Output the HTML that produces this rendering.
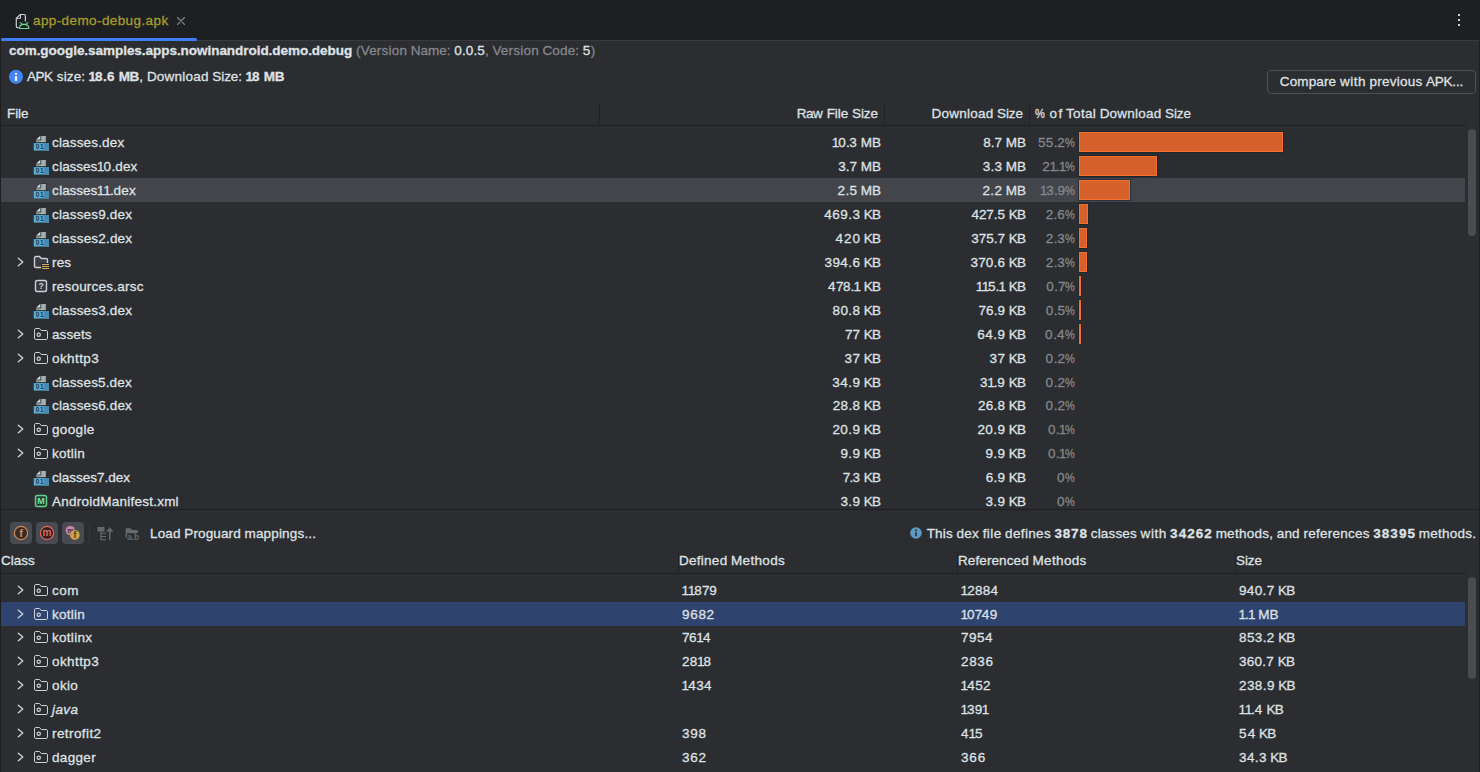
<!DOCTYPE html><html><head><meta charset="utf-8"><title>APK Analyzer</title><style>
html,body{margin:0;padding:0;background:#2b2d30;}
body{-webkit-text-stroke:.3px;width:1480px;height:772px;overflow:hidden;font-family:"Liberation Sans",sans-serif;font-size:13.5px;color:#dfe1e5;}
#app{position:relative;width:1480px;height:772px;overflow:hidden;background:#2b2d30;}
#app *{box-sizing:border-box;}
.abs{position:absolute;}
.t{position:absolute;white-space:pre;line-height:16px;height:16px;}
#tabbar{position:absolute;left:0;top:0;width:1480px;height:40px;background:#1e1f22;}
#tabline{position:absolute;left:0;top:40px;width:1480px;height:1px;background:#393b40;}
#tabul{position:absolute;left:1px;top:38px;width:196px;height:3px;background:#3f7ff5;border-radius:1.5px;}
#lborder{position:absolute;left:0;top:0;width:1px;height:772px;background:#1e1f22;}
#rborder{position:absolute;left:1479px;top:40px;width:1px;height:732px;background:#1e1f22;}
.gray{color:#84878d;}
b{font-weight:bold;}
.hdr{position:absolute;left:1px;width:1465px;height:24px;}
.hline{position:absolute;left:1px;width:1465px;height:1px;background:#1e1f22;}
.vsep{position:absolute;width:1px;background:#222326;}
.row{position:absolute;left:1px;width:1464px;height:24px;}
.row.sel1{background:#43454a;}
.row.sel2{background:#2e436e;}
.row > span{position:absolute;top:5px;line-height:16px;height:16px;white-space:pre;}
.row > .ic{position:absolute;left:32px;top:4px;}
.row > .chev{position:absolute;left:11px;top:4px;}
.row > .nm{left:51px;}
.row > .raw{right:584px;text-align:right;}
.row > .dl{right:439px;text-align:right;}
.row > .pct{right:389px;text-align:right;color:#84878d;}
.row > .bar{left:1078px;top:2px;height:20px;background:#d6602a;border:1px solid #f4702f;box-shadow:0 0 0 1px rgba(14,34,48,.5);}
.row > .c1{left:681px;}
.row > .c2{left:960px;}
.row > .c3{left:1238px;}
.thumb{position:absolute;left:1468px;width:8px;background:#4a4c50;border-radius:4px;}
#btn{position:absolute;left:1267px;top:70px;width:209px;height:24px;border:1px solid #4e5157;border-radius:4px;text-align:center;line-height:22px;}
.tb{position:absolute;top:522px;width:22px;height:22px;border-radius:4px;background:#484b51;}
.tb svg{position:absolute;left:0;top:0;}
svg text{-webkit-text-stroke:0;}

</style></head><body><div id="app">
<div id="tabbar"></div><div id="tabline"></div><div id="tabul"></div>
<svg class="abs" style="left:13px;top:11px" width="18" height="20" viewBox="0 0 18 20" fill="none"><path d="M5.500 16.600H4.600c-.7 0-1.300-.6-1.300-1.300V7.300L7.200 3.500h3.900c.7 0 1.300.6 1.300 1.300V10.500" stroke="#ced0d6" stroke-width="1.200"/><path d="M3.800 7.400H7.500V3.900" stroke="#ced0d6" stroke-width="1"/><path d="M6.300 17.450c0-2.400 2-4.100 4.750-4.100s4.800 1.700 4.800 4.100z" stroke="#6fd98f" stroke-width="1.150" fill="#1e1f22"/><path d="M8.600 13.800L7 11.200L9.900 13.200zM13.600 13.800L15.200 11.200L12.300 13.200z" fill="#6fd98f" stroke="#6fd98f" stroke-width=".5" stroke-linejoin="round"/></svg>
<span class="t" style="left:33px;top:13px;color:#a59d2a" id="tabtxt"><span style="letter-spacing:0.4px;margin-right:-0.4px">app-demo-debug.apk</span></span>
<svg class="abs" style="left:173px;top:13px" width="16" height="16" viewBox="0 0 16 16" stroke="#84878d" stroke-width="1.100" stroke-linecap="round"><path d="M4.500 4.500l7 7M11.500 4.500l-7 7"/></svg>
<div class="abs" style="left:1458px;top:14px;width:2px;height:2px;background:#ced0d6"></div>
<div class="abs" style="left:1458px;top:19px;width:2px;height:2px;background:#ced0d6"></div>
<div class="abs" style="left:1458px;top:24px;width:2px;height:2px;background:#ced0d6"></div>
<span class="t" style="left:9px;top:43px" id="pkgline"><b><span style="letter-spacing:-0.04px;margin-right:0.04px">com.google.samples.apps.nowinandroid.demo.debug</span></b><span style="color:#84878d;"> <span style="letter-spacing:0.21px;margin-right:-0.21px">(Version</span> Name: </span><span style="letter-spacing:0.15px;margin-right:-0.15px">0.0.5</span><span style="color:#84878d;">, <span style="letter-spacing:0.21px;margin-right:-0.21px">Version</span> <span style="letter-spacing:0.14px;margin-right:-0.14px">Code:</span> </span><span style="margin-right:0.39px">5</span><span style="color:#84878d;"><span style="margin-right:0.25px">)</span></span></span>
<svg class="abs" style="left:8px;top:69px" width="16" height="16" viewBox="0 0 16 16"><circle cx="8" cy="7.800" r="7.100" fill="#4285f6"/><rect x="6.900" y="7.100" width="2.200" height="4.800" fill="#fff"/><rect x="6.900" y="4" width="2.200" height="1.700" rx=".4" fill="#fff"/></svg>
<span class="t" style="left:27px;top:69px" id="apkline"><span style="letter-spacing:-0.5px;margin-right:0.5px">APK</span> <span style="letter-spacing:0.14px;margin-right:-0.14px">size:</span> <b><span style="margin:0 -0.98px 0 -0.39px">1</span><span style="margin-right:0.5px">8</span><span style="margin-right:0.1px">.</span><span style="margin-right:0.49px">6</span> <span style="letter-spacing:-0.34px;margin-right:0.34px">MB</span></b>, <span style="letter-spacing:0.22px;margin-right:-0.22px">Download</span> <span style="letter-spacing:-0.05px;margin-right:0.05px">Size:</span> <b><span style="margin:0 -0.98px 0 -0.39px">1</span><span style="margin-right:0.5px">8</span> <span style="letter-spacing:-0.34px;margin-right:0.34px">MB</span></b></span>
<div id="btn"><span style="letter-spacing:0.13px;margin-right:-0.13px">Compare</span> <span style="letter-spacing:0.57px;margin-right:-0.57px">with</span> <span style="letter-spacing:0.25px;margin-right:-0.25px">previous</span> <span style="letter-spacing:-0.2px;margin-right:0.2px">APK...</span></div>
<div class="hdr" style="top:102px">
<span class="t" style="left:6px;top:4px"><span style="letter-spacing:-0.07px;margin-right:0.07px">File</span></span>
<span class="t" style="right:588px;top:4px"><span style="letter-spacing:-0.38px;margin-right:0.38px">Raw</span> <span style="letter-spacing:-0.07px;margin-right:0.07px">File</span> <span style="letter-spacing:-0.07px;margin-right:0.07px">Size</span></span>
<span class="t" style="right:443px;top:4px"><span style="letter-spacing:0.22px;margin-right:-0.22px">Download</span> <span style="letter-spacing:-0.07px;margin-right:0.07px">Size</span></span>
<span class="t" style="left:1034px;top:4px"><span style="display:inline-block;transform:scaleX(.82);transform-origin:0 50%;margin-right:-1.25px">%</span> <span style="letter-spacing:1.34px;margin-right:-1.34px">of</span> <span style="letter-spacing:0.35px;margin-right:-0.35px">Total</span> <span style="letter-spacing:0.22px;margin-right:-0.22px">Download</span> <span style="letter-spacing:-0.07px;margin-right:0.07px">Size</span></span>
</div>
<div class="vsep" style="left:599px;top:103px;height:21px"></div>
<div class="vsep" style="left:884px;top:103px;height:21px"></div>
<div class="vsep" style="left:1029px;top:103px;height:21px"></div>
<div class="hline" style="top:125px"></div>

<div id="toprows">
<div class="row" style="top:130px">
<svg class="ic" width="17" height="18" viewBox="0 0 17 18"><path d="M7.300 1.500H13.300V8.800H2.800V5.800z" fill="#a6adb3" stroke="#17181a" stroke-width=".7"/><path d="M3.300 5.600L7.200 1.900V5.600z" fill="#cdd2d6"/><path d="M3 6.100H7.800V2" stroke="#3d4146" stroke-width=".9" fill="none"/><rect x="3.200" y="6.600" width="4.200" height="1" fill="#8b9197"/><rect x=".7" y="8.700" width="15.300" height="8.300" fill="#1f1a19"/><rect x=".7" y="9.100" width="15.300" height="7.500" fill="#58aedb"/><rect x="10.700" y="9.100" width="5.300" height="7.500" fill="#488bae"/><text x="2.800" y="15.200" font-family="Liberation Sans, sans-serif" font-weight="bold" font-size="6.600" letter-spacing=".5" fill="#1d3a4d">01</text></svg>
<span class="nm"><span style="letter-spacing:0.16px;margin-right:-0.16px">classes.dex</span></span><span class="raw"><span style="margin:0 -1.07px 0 -0.44px">1</span><span style="margin-right:0.29px">0</span><span style="margin-right:-0.42px">.</span><span style="margin-right:0.12px">3</span> MB</span><span class="dl"><span style="letter-spacing:-0.05px;margin-right:0.05px">8.7</span> MB</span><span class="pct"><span style="margin-right:0.33px">5</span><span style="margin-right:0.33px">5</span><span style="margin-right:-0.08px">.</span><span style="margin-right:0.36px">2</span><span style="display:inline-block;transform:scaleX(.82);transform-origin:0 50%;margin-right:-1.25px">%</span></span>
<span class="bar" style="width:204px"></span>
</div>
<div class="row" style="top:154px">
<svg class="ic" width="17" height="18" viewBox="0 0 17 18"><path d="M7.300 1.500H13.300V8.800H2.800V5.800z" fill="#a6adb3" stroke="#17181a" stroke-width=".7"/><path d="M3.300 5.600L7.200 1.900V5.600z" fill="#cdd2d6"/><path d="M3 6.100H7.800V2" stroke="#3d4146" stroke-width=".9" fill="none"/><rect x="3.200" y="6.600" width="4.200" height="1" fill="#8b9197"/><rect x=".7" y="8.700" width="15.300" height="8.300" fill="#1f1a19"/><rect x=".7" y="9.100" width="15.300" height="7.500" fill="#58aedb"/><rect x="10.700" y="9.100" width="5.300" height="7.500" fill="#488bae"/><text x="2.800" y="15.200" font-family="Liberation Sans, sans-serif" font-weight="bold" font-size="6.600" letter-spacing=".5" fill="#1d3a4d">01</text></svg>
<span class="nm"><span style="margin-right:0.55px">c</span>l<span style="margin-right:-0.34px">a</span>ss<span style="margin-right:-0.06px">e</span>s<span style="margin:0 -0.81px 0 -0.44px">1</span><span style="margin-right:0.55px">0</span><span style="margin-right:-0.16px">.</span><span style="margin-right:0.31px">d</span><span style="margin-right:-0.06px">e</span><span style="margin-right:0.22px">x</span></span><span class="raw"><span style="letter-spacing:-0.06px;margin-right:0.06px">3.7</span> MB</span><span class="dl"><span style="letter-spacing:0.2px;margin-right:-0.2px">3.3</span> MB</span><span class="pct">2<span style="margin:0 -1.07px 0 -0.44px">1</span><span style="margin-right:-0.42px">.</span><span style="margin:0 -1.07px 0 -0.44px">1</span><span style="display:inline-block;transform:scaleX(.82);transform-origin:0 50%;margin-right:-1.25px">%</span></span>
<span class="bar" style="width:78px"></span>
</div>
<div class="row sel1" style="top:178px">
<svg class="ic" width="17" height="18" viewBox="0 0 17 18"><path d="M7.300 1.500H13.300V8.800H2.800V5.800z" fill="#a6adb3" stroke="#17181a" stroke-width=".7"/><path d="M3.300 5.600L7.200 1.900V5.600z" fill="#cdd2d6"/><path d="M3 6.100H7.800V2" stroke="#3d4146" stroke-width=".9" fill="none"/><rect x="3.200" y="6.600" width="4.200" height="1" fill="#8b9197"/><rect x=".7" y="8.700" width="15.300" height="8.300" fill="#1f1a19"/><rect x=".7" y="9.100" width="15.300" height="7.500" fill="#58aedb"/><rect x="10.700" y="9.100" width="5.300" height="7.500" fill="#488bae"/><text x="2.800" y="15.200" font-family="Liberation Sans, sans-serif" font-weight="bold" font-size="6.600" letter-spacing=".5" fill="#1d3a4d">01</text></svg>
<span class="nm"><span style="margin-right:0.57px">c</span>l<span style="margin-right:-0.32px">a</span>sses<span style="margin:0 -0.79px 0 -0.44px">1</span><span style="margin:0 -0.79px 0 -0.44px">1</span><span style="margin-right:-0.14px">.</span><span style="margin-right:0.33px">d</span>e<span style="margin-right:0.24px">x</span></span><span class="raw"><span style="letter-spacing:0.31px;margin-right:-0.31px">2.5</span> MB</span><span class="dl"><span style="letter-spacing:0.41px;margin-right:-0.41px">2.2</span> MB</span><span class="pct"><span style="margin:0 -0.96px 0 -0.44px">1</span><span style="margin-right:0.22px">3</span><span style="margin-right:-0.31px">.</span><span style="margin-right:0.26px">9</span><span style="display:inline-block;transform:scaleX(.82);transform-origin:0 50%;margin-right:-1.25px">%</span></span>
<span class="bar" style="width:51px"></span>
</div>
<div class="row" style="top:202px">
<svg class="ic" width="17" height="18" viewBox="0 0 17 18"><path d="M7.300 1.500H13.300V8.800H2.800V5.800z" fill="#a6adb3" stroke="#17181a" stroke-width=".7"/><path d="M3.300 5.600L7.200 1.900V5.600z" fill="#cdd2d6"/><path d="M3 6.100H7.800V2" stroke="#3d4146" stroke-width=".9" fill="none"/><rect x="3.200" y="6.600" width="4.200" height="1" fill="#8b9197"/><rect x=".7" y="8.700" width="15.300" height="8.300" fill="#1f1a19"/><rect x=".7" y="9.100" width="15.300" height="7.500" fill="#58aedb"/><rect x="10.700" y="9.100" width="5.300" height="7.500" fill="#488bae"/><text x="2.800" y="15.200" font-family="Liberation Sans, sans-serif" font-weight="bold" font-size="6.600" letter-spacing=".5" fill="#1d3a4d">01</text></svg>
<span class="nm"><span style="letter-spacing:0.17px;margin-right:-0.17px">classes9.dex</span></span><span class="raw"><span style="letter-spacing:0.46px;margin-right:-0.46px">469.3</span> <span style="letter-spacing:-0.77px;margin-right:0.77px">KB</span></span><span class="dl"><span style="letter-spacing:-0.07px;margin-right:0.07px">427.5</span> <span style="letter-spacing:-0.77px;margin-right:0.77px">KB</span></span><span class="pct"><span style="margin-right:0.34px">2</span><span style="margin-right:-0.09px">.</span><span style="margin-right:0.47px">6</span><span style="display:inline-block;transform:scaleX(.82);transform-origin:0 50%;margin-right:-1.25px">%</span></span>
<span class="bar" style="width:9px"></span>
</div>
<div class="row" style="top:226px">
<svg class="ic" width="17" height="18" viewBox="0 0 17 18"><path d="M7.300 1.500H13.300V8.800H2.800V5.800z" fill="#a6adb3" stroke="#17181a" stroke-width=".7"/><path d="M3.300 5.600L7.200 1.900V5.600z" fill="#cdd2d6"/><path d="M3 6.100H7.800V2" stroke="#3d4146" stroke-width=".9" fill="none"/><rect x="3.200" y="6.600" width="4.200" height="1" fill="#8b9197"/><rect x=".7" y="8.700" width="15.300" height="8.300" fill="#1f1a19"/><rect x=".7" y="9.100" width="15.300" height="7.500" fill="#58aedb"/><rect x="10.700" y="9.100" width="5.300" height="7.500" fill="#488bae"/><text x="2.800" y="15.200" font-family="Liberation Sans, sans-serif" font-weight="bold" font-size="6.600" letter-spacing=".5" fill="#1d3a4d">01</text></svg>
<span class="nm"><span style="letter-spacing:0.18px;margin-right:-0.18px">classes2.dex</span></span><span class="raw"><span style="letter-spacing:1.0px;margin-right:-1.0px">420</span> <span style="letter-spacing:-0.77px;margin-right:0.77px">KB</span></span><span class="dl">375.7 <span style="letter-spacing:-0.77px;margin-right:0.77px">KB</span></span><span class="pct"><span style="margin-right:0.34px">2</span><span style="margin-right:-0.1px">.</span><span style="margin-right:0.43px">3</span><span style="display:inline-block;transform:scaleX(.82);transform-origin:0 50%;margin-right:-1.25px">%</span></span>
<span class="bar" style="width:8px"></span>
</div>
<div class="row" style="top:250px">
<svg class="chev" width="16" height="16" viewBox="0 0 16 16" fill="none" stroke="#ced0d6" stroke-width="1.400" stroke-linecap="round" stroke-linejoin="round"><path d="M6.300 4.300L10.800 8L6.300 11.700"/></svg>
<svg class="ic" width="16" height="16" viewBox="0 0 16 16" fill="none"><path d="M1.500 4v8.200c0 .7.6 1.300 1.300 1.300h10.400c.7 0 1.300-.6 1.300-1.300V5.800c0-.7-.6-1.300-1.300-1.300H8.300L6.500 2.500H2.800c-.7 0-1.300.6-1.300 1.300z" stroke="#ced0d6" stroke-width="1.400" fill="#3b3d42"/><rect x="8" y="9" width="8.500" height="7" fill="#2b2d30"/><path d="M9 10.500h7M9 12.500h7M9 14.500h7" stroke="#d6ae58" stroke-width="1.100"/></svg>
<span class="nm"><span style="letter-spacing:0.18px;margin-right:-0.18px">res</span></span><span class="raw"><span style="letter-spacing:0.43px;margin-right:-0.43px">394.6</span> <span style="letter-spacing:-0.77px;margin-right:0.77px">KB</span></span><span class="dl"><span style="letter-spacing:0.18px;margin-right:-0.18px">370.6</span> <span style="letter-spacing:-0.77px;margin-right:0.77px">KB</span></span><span class="pct"><span style="margin-right:0.34px">2</span><span style="margin-right:-0.1px">.</span><span style="margin-right:0.43px">3</span><span style="display:inline-block;transform:scaleX(.82);transform-origin:0 50%;margin-right:-1.25px">%</span></span>
<span class="bar" style="width:8px"></span>
</div>
<div class="row" style="top:274px">
<svg class="ic" width="16" height="16" viewBox="0 0 16 16" fill="none"><rect x="2.500" y="2.500" width="11" height="11" rx="1.800" stroke="#ced0d6" stroke-width="1.400" fill="#36383d"/><text x="8" y="11.300" text-anchor="middle" font-family="Liberation Sans, sans-serif" font-weight="bold" font-size="8.500" fill="#ced0d6">?</text></svg>
<span class="nm"><span style="letter-spacing:0.22px;margin-right:-0.22px">resources.arsc</span></span><span class="raw"><span style="margin-right:0.49px">4</span><span style="margin-right:-0.56px">7</span><span style="margin-right:0.13px">8</span><span style="margin-right:-0.42px">.</span><span style="margin:0 -1.07px 0 -0.44px">1</span> <span style="letter-spacing:-0.77px;margin-right:0.77px">KB</span></span><span class="dl"><span style="margin:0 -1.07px 0 -0.44px">1</span><span style="margin:0 -1.07px 0 -0.44px">1</span>5<span style="margin-right:-0.42px">.</span><span style="margin:0 -1.07px 0 -0.44px">1</span> <span style="letter-spacing:-0.77px;margin-right:0.77px">KB</span></span><span class="pct"><span style="margin-right:0.57px">0</span><span style="margin-right:-0.14px">.</span><span style="margin-right:-0.28px">7</span><span style="display:inline-block;transform:scaleX(.82);transform-origin:0 50%;margin-right:-1.25px">%</span></span>
<span class="bar" style="width:2px"></span>
</div>
<div class="row" style="top:298px">
<svg class="ic" width="17" height="18" viewBox="0 0 17 18"><path d="M7.300 1.500H13.300V8.800H2.800V5.800z" fill="#a6adb3" stroke="#17181a" stroke-width=".7"/><path d="M3.300 5.600L7.200 1.900V5.600z" fill="#cdd2d6"/><path d="M3 6.100H7.800V2" stroke="#3d4146" stroke-width=".9" fill="none"/><rect x="3.200" y="6.600" width="4.200" height="1" fill="#8b9197"/><rect x=".7" y="8.700" width="15.300" height="8.300" fill="#1f1a19"/><rect x=".7" y="9.100" width="15.300" height="7.500" fill="#58aedb"/><rect x="10.700" y="9.100" width="5.300" height="7.500" fill="#488bae"/><text x="2.800" y="15.200" font-family="Liberation Sans, sans-serif" font-weight="bold" font-size="6.600" letter-spacing=".5" fill="#1d3a4d">01</text></svg>
<span class="nm"><span style="letter-spacing:0.17px;margin-right:-0.17px">classes3.dex</span></span><span class="raw"><span style="letter-spacing:0.38px;margin-right:-0.38px">80.8</span> <span style="letter-spacing:-0.77px;margin-right:0.77px">KB</span></span><span class="dl"><span style="letter-spacing:0.07px;margin-right:-0.07px">76.9</span> <span style="letter-spacing:-0.77px;margin-right:0.77px">KB</span></span><span class="pct"><span style="margin-right:0.57px">0</span><span style="margin-right:-0.14px">.</span><span style="margin-right:0.27px">5</span><span style="display:inline-block;transform:scaleX(.82);transform-origin:0 50%;margin-right:-1.25px">%</span></span>
<span class="bar" style="width:1px"></span>
</div>
<div class="row" style="top:322px">
<svg class="chev" width="16" height="16" viewBox="0 0 16 16" fill="none" stroke="#ced0d6" stroke-width="1.400" stroke-linecap="round" stroke-linejoin="round"><path d="M6.300 4.300L10.800 8L6.300 11.700"/></svg>
<svg class="ic" width="16" height="16" viewBox="0 0 16 16" fill="none" stroke="#ced0d6" stroke-width="1"><path d="M1.5 4v8.2c0 .7.6 1.3 1.300 1.300h10.400c.7 0 1.300-.6 1.300-1.300V5.800c0-.7-.6-1.300-1.300-1.300H8.300L6.500 2.500H2.800c-.7 0-1.300.6-1.300 1.300z"/><circle cx="5.700" cy="8.700" r="1.650" fill="none" stroke-width="1.200"/></svg>
<span class="nm"><span style="letter-spacing:0.11px;margin-right:-0.11px">assets</span></span><span class="raw"><span style="letter-spacing:-0.06px;margin-right:0.06px">77</span> <span style="letter-spacing:-0.77px;margin-right:0.77px">KB</span></span><span class="dl"><span style="letter-spacing:0.49px;margin-right:-0.49px">64.9</span> <span style="letter-spacing:-0.77px;margin-right:0.77px">KB</span></span><span class="pct"><span style="margin-right:0.61px">0</span><span style="margin-right:-0.09px">.</span><span style="margin-right:0.81px">4</span><span style="display:inline-block;transform:scaleX(.82);transform-origin:0 50%;margin-right:-1.25px">%</span></span>
<span class="bar" style="width:1px"></span>
</div>
<div class="row" style="top:346px">
<svg class="chev" width="16" height="16" viewBox="0 0 16 16" fill="none" stroke="#ced0d6" stroke-width="1.400" stroke-linecap="round" stroke-linejoin="round"><path d="M6.300 4.300L10.800 8L6.300 11.700"/></svg>
<svg class="ic" width="16" height="16" viewBox="0 0 16 16" fill="none" stroke="#ced0d6" stroke-width="1"><path d="M1.5 4v8.2c0 .7.6 1.3 1.300 1.300h10.400c.7 0 1.300-.6 1.300-1.300V5.800c0-.7-.6-1.300-1.300-1.300H8.300L6.500 2.500H2.800c-.7 0-1.300.6-1.300 1.300z"/><circle cx="5.700" cy="8.700" r="1.650" fill="none" stroke-width="1.200"/></svg>
<span class="nm"><span style="letter-spacing:0.42px;margin-right:-0.42px">okhttp3</span></span><span class="raw"><span style="letter-spacing:0.36px;margin-right:-0.36px">37</span> <span style="letter-spacing:-0.77px;margin-right:0.77px">KB</span></span><span class="dl"><span style="letter-spacing:0.36px;margin-right:-0.36px">37</span> <span style="letter-spacing:-0.77px;margin-right:0.77px">KB</span></span><span class="pct"><span style="margin-right:0.61px">0</span><span style="margin-right:-0.09px">.</span><span style="margin-right:0.34px">2</span><span style="display:inline-block;transform:scaleX(.82);transform-origin:0 50%;margin-right:-1.25px">%</span></span>
</div>
<div class="row" style="top:370px">
<svg class="ic" width="17" height="18" viewBox="0 0 17 18"><path d="M7.300 1.500H13.300V8.800H2.800V5.800z" fill="#a6adb3" stroke="#17181a" stroke-width=".7"/><path d="M3.300 5.600L7.200 1.900V5.600z" fill="#cdd2d6"/><path d="M3 6.100H7.800V2" stroke="#3d4146" stroke-width=".9" fill="none"/><rect x="3.200" y="6.600" width="4.200" height="1" fill="#8b9197"/><rect x=".7" y="8.700" width="15.300" height="8.300" fill="#1f1a19"/><rect x=".7" y="9.100" width="15.300" height="7.500" fill="#58aedb"/><rect x="10.700" y="9.100" width="5.300" height="7.500" fill="#488bae"/><text x="2.800" y="15.200" font-family="Liberation Sans, sans-serif" font-weight="bold" font-size="6.600" letter-spacing=".5" fill="#1d3a4d">01</text></svg>
<span class="nm"><span style="letter-spacing:0.15px;margin-right:-0.15px">classes5.dex</span></span><span class="raw"><span style="letter-spacing:0.48px;margin-right:-0.48px">34.9</span> <span style="letter-spacing:-0.77px;margin-right:0.77px">KB</span></span><span class="dl"><span style="margin-right:0.22px">3</span><span style="margin:0 -0.96px 0 -0.44px">1</span><span style="margin-right:-0.31px">.</span><span style="margin-right:0.25px">9</span> <span style="letter-spacing:-0.77px;margin-right:0.77px">KB</span></span><span class="pct"><span style="margin-right:0.61px">0</span><span style="margin-right:-0.09px">.</span><span style="margin-right:0.34px">2</span><span style="display:inline-block;transform:scaleX(.82);transform-origin:0 50%;margin-right:-1.25px">%</span></span>
</div>
<div class="row" style="top:393px">
<svg class="ic" width="17" height="18" viewBox="0 0 17 18"><path d="M7.300 1.500H13.300V8.800H2.800V5.800z" fill="#a6adb3" stroke="#17181a" stroke-width=".7"/><path d="M3.300 5.600L7.200 1.900V5.600z" fill="#cdd2d6"/><path d="M3 6.100H7.800V2" stroke="#3d4146" stroke-width=".9" fill="none"/><rect x="3.200" y="6.600" width="4.200" height="1" fill="#8b9197"/><rect x=".7" y="8.700" width="15.300" height="8.300" fill="#1f1a19"/><rect x=".7" y="9.100" width="15.300" height="7.500" fill="#58aedb"/><rect x="10.700" y="9.100" width="5.300" height="7.500" fill="#488bae"/><text x="2.800" y="15.200" font-family="Liberation Sans, sans-serif" font-weight="bold" font-size="6.600" letter-spacing=".5" fill="#1d3a4d">01</text></svg>
<span class="nm"><span style="letter-spacing:0.16px;margin-right:-0.16px">classes6.dex</span></span><span class="raw"><span style="letter-spacing:0.3px;margin-right:-0.3px">28.8</span> <span style="letter-spacing:-0.77px;margin-right:0.77px">KB</span></span><span class="dl"><span style="letter-spacing:0.26px;margin-right:-0.26px">26.8</span> <span style="letter-spacing:-0.77px;margin-right:0.77px">KB</span></span><span class="pct"><span style="margin-right:0.61px">0</span><span style="margin-right:-0.09px">.</span><span style="margin-right:0.34px">2</span><span style="display:inline-block;transform:scaleX(.82);transform-origin:0 50%;margin-right:-1.25px">%</span></span>
</div>
<div class="row" style="top:417px">
<svg class="chev" width="16" height="16" viewBox="0 0 16 16" fill="none" stroke="#ced0d6" stroke-width="1.400" stroke-linecap="round" stroke-linejoin="round"><path d="M6.300 4.300L10.800 8L6.300 11.700"/></svg>
<svg class="ic" width="16" height="16" viewBox="0 0 16 16" fill="none" stroke="#ced0d6" stroke-width="1"><path d="M1.5 4v8.2c0 .7.6 1.3 1.300 1.300h10.400c.7 0 1.300-.6 1.300-1.300V5.800c0-.7-.6-1.300-1.300-1.300H8.300L6.500 2.500H2.800c-.7 0-1.300.6-1.300 1.300z"/><circle cx="5.700" cy="8.700" r="1.650" fill="none" stroke-width="1.200"/></svg>
<span class="nm"><span style="letter-spacing:0.34px;margin-right:-0.34px">google</span></span><span class="raw"><span style="letter-spacing:0.42px;margin-right:-0.42px">20.9</span> <span style="letter-spacing:-0.77px;margin-right:0.77px">KB</span></span><span class="dl"><span style="letter-spacing:0.42px;margin-right:-0.42px">20.9</span> <span style="letter-spacing:-0.77px;margin-right:0.77px">KB</span></span><span class="pct"><span style="margin-right:0.29px">0</span><span style="margin-right:-0.42px">.</span><span style="margin:0 -1.07px 0 -0.44px">1</span><span style="display:inline-block;transform:scaleX(.82);transform-origin:0 50%;margin-right:-1.25px">%</span></span>
</div>
<div class="row" style="top:441px">
<svg class="chev" width="16" height="16" viewBox="0 0 16 16" fill="none" stroke="#ced0d6" stroke-width="1.400" stroke-linecap="round" stroke-linejoin="round"><path d="M6.300 4.300L10.800 8L6.300 11.700"/></svg>
<svg class="ic" width="16" height="16" viewBox="0 0 16 16" fill="none" stroke="#ced0d6" stroke-width="1"><path d="M1.5 4v8.2c0 .7.6 1.3 1.300 1.300h10.400c.7 0 1.300-.6 1.300-1.300V5.800c0-.7-.6-1.300-1.300-1.300H8.300L6.500 2.500H2.800c-.7 0-1.300.6-1.300 1.300z"/><circle cx="5.700" cy="8.700" r="1.650" fill="none" stroke-width="1.200"/></svg>
<span class="nm"><span style="letter-spacing:0.27px;margin-right:-0.27px">kotlin</span></span><span class="raw"><span style="letter-spacing:0.34px;margin-right:-0.34px">9.9</span> <span style="letter-spacing:-0.77px;margin-right:0.77px">KB</span></span><span class="dl"><span style="letter-spacing:0.34px;margin-right:-0.34px">9.9</span> <span style="letter-spacing:-0.77px;margin-right:0.77px">KB</span></span><span class="pct"><span style="margin-right:0.29px">0</span><span style="margin-right:-0.42px">.</span><span style="margin:0 -1.07px 0 -0.44px">1</span><span style="display:inline-block;transform:scaleX(.82);transform-origin:0 50%;margin-right:-1.25px">%</span></span>
</div>
<div class="row" style="top:465px">
<svg class="ic" width="17" height="18" viewBox="0 0 17 18"><path d="M7.300 1.500H13.300V8.800H2.800V5.800z" fill="#a6adb3" stroke="#17181a" stroke-width=".7"/><path d="M3.300 5.600L7.200 1.900V5.600z" fill="#cdd2d6"/><path d="M3 6.100H7.800V2" stroke="#3d4146" stroke-width=".9" fill="none"/><rect x="3.200" y="6.600" width="4.200" height="1" fill="#8b9197"/><rect x=".7" y="8.700" width="15.300" height="8.300" fill="#1f1a19"/><rect x=".7" y="9.100" width="15.300" height="7.500" fill="#58aedb"/><rect x="10.700" y="9.100" width="5.300" height="7.500" fill="#488bae"/><text x="2.800" y="15.200" font-family="Liberation Sans, sans-serif" font-weight="bold" font-size="6.600" letter-spacing=".5" fill="#1d3a4d">01</text></svg>
<span class="nm">classes7.dex</span><span class="raw"><span style="letter-spacing:-0.8px;margin-right:0.8px">7.3</span> <span style="letter-spacing:-0.77px;margin-right:0.77px">KB</span></span><span class="dl"><span style="letter-spacing:0.28px;margin-right:-0.28px">6.9</span> <span style="letter-spacing:-0.77px;margin-right:0.77px">KB</span></span><span class="pct"><span style="margin-right:0.7px">0</span><span style="display:inline-block;transform:scaleX(.82);transform-origin:0 50%;margin-right:-1.25px">%</span></span>
</div>
<div class="row" style="top:489px">
<svg class="ic" width="16" height="16" viewBox="0 0 16 16" fill="none"><rect x="2.500" y="2.500" width="11" height="11" rx="2" stroke="#5fd08f" stroke-width="1.500" fill="#253b30"/><text x="8" y="11.300" text-anchor="middle" font-family="Liberation Sans, sans-serif" font-weight="bold" font-size="9" fill="#72e6a4">M</text></svg>
<span class="nm"><span style="letter-spacing:0.24px;margin-right:-0.24px">AndroidManifest.xml</span></span><span class="raw"><span style="letter-spacing:0.34px;margin-right:-0.34px">3.9</span> <span style="letter-spacing:-0.77px;margin-right:0.77px">KB</span></span><span class="dl"><span style="letter-spacing:0.34px;margin-right:-0.34px">3.9</span> <span style="letter-spacing:-0.77px;margin-right:0.77px">KB</span></span><span class="pct"><span style="margin-right:0.7px">0</span><span style="display:inline-block;transform:scaleX(.82);transform-origin:0 50%;margin-right:-1.25px">%</span></span>
</div>
</div>
<div class="thumb" style="top:129px;height:107px"></div>
<div class="abs" id="toolbar" style="left:1px;top:509px;width:1478px;height:69px;background:#2b2d30"></div>
<div class="abs" style="left:1px;top:509px;width:1478px;height:1px;background:#1e1f22"></div>
<div class="tb" style="left:10px"><svg width="22" height="22" viewBox="0 0 22 22"><circle cx="11" cy="11" r="6.600" fill="#3b2a22" stroke="#cf8856" stroke-width="1.200"/><text x="11.100" y="15" text-anchor="middle" font-family="Liberation Sans, sans-serif" font-weight="bold" font-size="11" fill="#cf8856">f</text></svg></div>
<div class="tb" style="left:36px"><svg width="22" height="22" viewBox="0 0 22 22"><circle cx="11" cy="11" r="6.600" fill="#33201f" stroke="#dc6a65" stroke-width="1.200"/><text x="11" y="14.300" text-anchor="middle" font-family="Liberation Sans, sans-serif" font-weight="bold" font-size="10" fill="#dc6a65">m</text></svg></div>
<div class="tb" style="left:62px"><svg width="22" height="22" viewBox="0 0 22 22"><circle cx="8.300" cy="8.600" r="4.700" fill="#cc89aa"/><text x="8.300" y="10.800" text-anchor="middle" font-family="Liberation Sans, sans-serif" font-weight="bold" font-size="7" fill="#4a2438">m</text><circle cx="12.800" cy="12.900" r="5.200" fill="#cba24b" stroke="#43454a" stroke-width=".5"/><text x="12.900" y="15.900" text-anchor="middle" font-family="Liberation Sans, sans-serif" font-weight="bold" font-size="8.500" fill="#4a3a1a">f</text></svg></div>
<svg class="abs" style="left:97px;top:526px" width="17" height="16" viewBox="0 0 17 16" fill="#66686c"><rect x=".5" y="1" width="7" height="4.500"/><rect x="3.300" y="5" width="1.200" height="9.200"/><rect x="4" y="6.700" width="5" height="1.100"/><rect x="4" y="10" width="5" height="1.100"/><rect x="4" y="13.100" width="5" height="1.100"/><rect x="12" y="3" width="1.500" height="11.200"/><path d="M9 5.700L12.750 1.200L16.500 5.700z"/></svg>
<svg class="abs" style="left:124px;top:526px" width="17" height="16" viewBox="0 0 17 16" fill="#66686c"><path d="M1.600 2.200H6.500L7.800 4H13.700V7.200H3.100V11.600H1.600z"/><text x="3.300" y="14.100" font-family="Liberation Sans, sans-serif" font-weight="bold" font-size="8.300" fill="#66686c" letter-spacing="-.1">a.b</text></svg>
<div class="vsep" style="left:89px;top:523px;height:20px;background:#36383c"></div>
<span class="t" style="left:150px;top:526px" id="loadtxt"><span style="letter-spacing:0.17px;margin-right:-0.17px">Load</span> <span style="letter-spacing:0.12px;margin-right:-0.12px">Proguard</span> <span style="letter-spacing:0.17px;margin-right:-0.17px">mappings...</span></span>
<svg class="abs" style="left:908px;top:525px" width="16" height="16" viewBox="0 0 16 16"><circle cx="8" cy="8" r="5.800" fill="#5a9bc2"/><rect x="7.200" y="7.200" width="1.600" height="4" fill="#2b2d30"/><circle cx="8" cy="5.300" r="1" fill="#2b2d30"/></svg>
<span class="t" style="right:4px;top:526px" id="dexinfo"><span style="letter-spacing:0.19px;margin-right:-0.19px">This</span> <span style="letter-spacing:0.28px;margin-right:-0.28px">dex</span> <span style="letter-spacing:0.47px;margin-right:-0.47px">file</span> <span style="letter-spacing:0.35px;margin-right:-0.35px">defines</span> <b><span style="letter-spacing:0.82px;margin-right:-0.82px">3878</span></b> <span style="letter-spacing:0.17px;margin-right:-0.17px">classes</span> <span style="letter-spacing:0.57px;margin-right:-0.57px">with</span> <b><span style="letter-spacing:1.06px;margin-right:-1.06px">34262</span></b> <span style="letter-spacing:0.25px;margin-right:-0.25px">methods,</span> <span style="letter-spacing:0.21px;margin-right:-0.21px">and</span> <span style="letter-spacing:0.25px;margin-right:-0.25px">references</span> <b><span style="letter-spacing:1.05px;margin-right:-1.05px">38395</span></b> <span style="letter-spacing:0.25px;margin-right:-0.25px">methods.</span></span>
<div class="hdr" style="top:549px">
<span class="t" style="left:0px;top:4px">Class</span>
<span class="t" style="left:678px;top:4px"><span style="letter-spacing:0.27px;margin-right:-0.27px">Defined</span> <span style="letter-spacing:0.35px;margin-right:-0.35px">Methods</span></span>
<span class="t" style="left:957px;top:4px"><span style="letter-spacing:0.1px;margin-right:-0.1px">Referenced</span> <span style="letter-spacing:0.35px;margin-right:-0.35px">Methods</span></span>
<span class="t" style="left:1235px;top:4px"><span style="letter-spacing:-0.07px;margin-right:0.07px">Size</span></span>
</div>
<div class="vsep" style="left:678px;top:550px;height:22px"></div>
<div class="vsep" style="left:957px;top:550px;height:22px"></div>
<div class="vsep" style="left:1235px;top:550px;height:22px"></div>
<div class="hline" style="top:573px"></div>

<div id="botrows">
<div class="row" style="top:578px">
<svg class="chev" width="16" height="16" viewBox="0 0 16 16" fill="none" stroke="#ced0d6" stroke-width="1.400" stroke-linecap="round" stroke-linejoin="round"><path d="M6.300 4.300L10.800 8L6.300 11.700"/></svg>
<svg class="ic" width="16" height="16" viewBox="0 0 16 16" fill="none" stroke="#ced0d6" stroke-width="1"><path d="M1.5 4v8.2c0 .7.6 1.3 1.300 1.300h10.400c.7 0 1.300-.6 1.300-1.300V5.800c0-.7-.6-1.300-1.300-1.300H8.300L6.500 2.500H2.800c-.7 0-1.300.6-1.300 1.300z"/><circle cx="5.700" cy="8.700" r="1.650" fill="none" stroke-width="1.200"/></svg>
<span class="nm"><span style="letter-spacing:0.55px;margin-right:-0.55px">com</span></span><span class="c1"><span style="margin:0 -0.93px 0 -0.44px">1</span><span style="margin:0 -0.93px 0 -0.44px">1</span><span style="margin-right:0.27px">8</span><span style="margin-right:-0.42px">7</span><span style="margin-right:0.28px">9</span></span><span class="c2"><span style="margin:0 -0.89px 0 -0.44px">1</span><span style="margin-right:0.2px">2</span><span style="margin-right:0.31px">8</span><span style="margin-right:0.31px">8</span><span style="margin-right:0.67px">4</span></span><span class="c3"><span style="letter-spacing:0.36px;margin-right:-0.36px">940.7</span> <span style="letter-spacing:-0.77px;margin-right:0.77px">KB</span></span>
</div>
<div class="row sel2" style="top:602px">
<svg class="chev" width="16" height="16" viewBox="0 0 16 16" fill="none" stroke="#ced0d6" stroke-width="1.400" stroke-linecap="round" stroke-linejoin="round"><path d="M6.300 4.300L10.800 8L6.300 11.700"/></svg>
<svg class="ic" width="16" height="16" viewBox="0 0 16 16" fill="none" stroke="#ced0d6" stroke-width="1"><path d="M1.5 4v8.2c0 .7.6 1.3 1.300 1.300h10.400c.7 0 1.300-.6 1.300-1.300V5.800c0-.7-.6-1.300-1.300-1.300H8.300L6.500 2.500H2.800c-.7 0-1.300.6-1.300 1.300z"/><circle cx="5.700" cy="8.700" r="1.650" fill="none" stroke-width="1.200"/></svg>
<span class="nm"><span style="letter-spacing:0.27px;margin-right:-0.27px">kotlin</span></span><span class="c1"><span style="letter-spacing:0.68px;margin-right:-0.68px">9682</span></span><span class="c2"><span style="margin:0 -1.07px 0 -0.44px">1</span><span style="margin-right:0.29px">0</span><span style="margin-right:-0.56px">7</span><span style="margin-right:0.49px">4</span><span style="margin-right:0.15px">9</span></span><span class="c3"><span style="margin:0 -1.07px 0 -0.44px">1</span><span style="margin-right:-0.42px">.</span><span style="margin:0 -1.07px 0 -0.44px">1</span> MB</span>
</div>
<div class="row" style="top:625px">
<svg class="chev" width="16" height="16" viewBox="0 0 16 16" fill="none" stroke="#ced0d6" stroke-width="1.400" stroke-linecap="round" stroke-linejoin="round"><path d="M6.300 4.300L10.800 8L6.300 11.700"/></svg>
<svg class="ic" width="16" height="16" viewBox="0 0 16 16" fill="none" stroke="#ced0d6" stroke-width="1"><path d="M1.5 4v8.2c0 .7.6 1.3 1.300 1.300h10.400c.7 0 1.300-.6 1.300-1.300V5.800c0-.7-.6-1.300-1.300-1.300H8.300L6.500 2.500H2.800c-.7 0-1.300.6-1.300 1.300z"/><circle cx="5.700" cy="8.700" r="1.650" fill="none" stroke-width="1.200"/></svg>
<span class="nm"><span style="letter-spacing:0.28px;margin-right:-0.28px">kotlinx</span></span><span class="c1"><span style="margin-right:-0.48px">7</span><span style="margin-right:0.22px">6</span><span style="margin:0 -0.99px 0 -0.44px">1</span><span style="margin-right:0.56px">4</span></span><span class="c2"><span style="letter-spacing:0.52px;margin-right:-0.52px">7954</span></span><span class="c3"><span style="letter-spacing:0.39px;margin-right:-0.39px">853.2</span> <span style="letter-spacing:-0.77px;margin-right:0.77px">KB</span></span>
</div>
<div class="row" style="top:649px">
<svg class="chev" width="16" height="16" viewBox="0 0 16 16" fill="none" stroke="#ced0d6" stroke-width="1.400" stroke-linecap="round" stroke-linejoin="round"><path d="M6.300 4.300L10.800 8L6.300 11.700"/></svg>
<svg class="ic" width="16" height="16" viewBox="0 0 16 16" fill="none" stroke="#ced0d6" stroke-width="1"><path d="M1.5 4v8.2c0 .7.6 1.3 1.300 1.300h10.400c.7 0 1.300-.6 1.300-1.300V5.800c0-.7-.6-1.300-1.300-1.300H8.300L6.500 2.500H2.800c-.7 0-1.300.6-1.300 1.300z"/><circle cx="5.700" cy="8.700" r="1.650" fill="none" stroke-width="1.200"/></svg>
<span class="nm"><span style="letter-spacing:0.42px;margin-right:-0.42px">okhttp3</span></span><span class="c1"><span style="margin-right:0.14px">2</span><span style="margin-right:0.25px">8</span><span style="margin:0 -0.94px 0 -0.44px">1</span><span style="margin-right:0.25px">8</span></span><span class="c2"><span style="letter-spacing:0.67px;margin-right:-0.67px">2836</span></span><span class="c3"><span style="letter-spacing:0.27px;margin-right:-0.27px">360.7</span> <span style="letter-spacing:-0.77px;margin-right:0.77px">KB</span></span>
</div>
<div class="row" style="top:673px">
<svg class="chev" width="16" height="16" viewBox="0 0 16 16" fill="none" stroke="#ced0d6" stroke-width="1.400" stroke-linecap="round" stroke-linejoin="round"><path d="M6.300 4.300L10.800 8L6.300 11.700"/></svg>
<svg class="ic" width="16" height="16" viewBox="0 0 16 16" fill="none" stroke="#ced0d6" stroke-width="1"><path d="M1.5 4v8.2c0 .7.6 1.3 1.300 1.300h10.400c.7 0 1.300-.6 1.300-1.300V5.800c0-.7-.6-1.300-1.300-1.300H8.300L6.500 2.500H2.800c-.7 0-1.300.6-1.300 1.300z"/><circle cx="5.700" cy="8.700" r="1.650" fill="none" stroke-width="1.200"/></svg>
<span class="nm"><span style="letter-spacing:0.37px;margin-right:-0.37px">okio</span></span><span class="c1"><span style="margin:0 -0.94px 0 -0.44px">1</span><span style="margin-right:0.61px">4</span><span style="margin-right:0.24px">3</span><span style="margin-right:0.61px">4</span></span><span class="c2"><span style="margin:0 -0.94px 0 -0.44px">1</span><span style="margin-right:0.61px">4</span><span style="margin-right:0.11px">5</span><span style="margin-right:0.14px">2</span></span><span class="c3"><span style="letter-spacing:0.41px;margin-right:-0.41px">238.9</span> <span style="letter-spacing:-0.77px;margin-right:0.77px">KB</span></span>
</div>
<div class="row" style="top:697px">
<svg class="chev" width="16" height="16" viewBox="0 0 16 16" fill="none" stroke="#ced0d6" stroke-width="1.400" stroke-linecap="round" stroke-linejoin="round"><path d="M6.300 4.300L10.800 8L6.300 11.700"/></svg>
<svg class="ic" width="16" height="16" viewBox="0 0 16 16" fill="none" stroke="#ced0d6" stroke-width="1"><path d="M1.5 4v8.2c0 .7.6 1.3 1.300 1.300h10.400c.7 0 1.300-.6 1.300-1.300V5.800c0-.7-.6-1.300-1.300-1.300H8.300L6.500 2.500H2.800c-.7 0-1.300.6-1.300 1.300z"/><circle cx="5.700" cy="8.700" r="1.650" fill="none" stroke-width="1.200"/></svg>
<span class="nm"><i><span style="letter-spacing:0.4px;margin-right:-0.4px">java</span></i></span><span class="c1"></span><span class="c2"><span style="margin:0 -1.07px 0 -0.44px">1</span><span style="margin-right:0.12px">3</span><span style="margin-right:0.15px">9</span><span style="margin:0 -1.07px 0 -0.44px">1</span></span><span class="c3"><span style="margin:0 -0.97px 0 -0.44px">1</span><span style="margin:0 -0.97px 0 -0.44px">1</span><span style="margin-right:-0.32px">.</span><span style="margin-right:0.59px">4</span> <span style="letter-spacing:-0.77px;margin-right:0.77px">KB</span></span>
</div>
<div class="row" style="top:721px">
<svg class="chev" width="16" height="16" viewBox="0 0 16 16" fill="none" stroke="#ced0d6" stroke-width="1.400" stroke-linecap="round" stroke-linejoin="round"><path d="M6.300 4.300L10.800 8L6.300 11.700"/></svg>
<svg class="ic" width="16" height="16" viewBox="0 0 16 16" fill="none" stroke="#ced0d6" stroke-width="1"><path d="M1.5 4v8.2c0 .7.6 1.3 1.300 1.300h10.400c.7 0 1.300-.6 1.300-1.300V5.800c0-.7-.6-1.300-1.300-1.300H8.300L6.500 2.500H2.800c-.7 0-1.300.6-1.300 1.300z"/><circle cx="5.700" cy="8.700" r="1.650" fill="none" stroke-width="1.200"/></svg>
<span class="nm"><span style="letter-spacing:0.42px;margin-right:-0.42px">retrofit2</span></span><span class="c1"><span style="letter-spacing:0.8px;margin-right:-0.8px">398</span></span><span class="c2"><span style="margin-right:0.49px">4</span><span style="margin:0 -1.07px 0 -0.44px">1</span>5</span><span class="c3"><span style="letter-spacing:1.28px;margin-right:-1.28px">54</span> <span style="letter-spacing:-0.77px;margin-right:0.77px">KB</span></span>
</div>
<div class="row" style="top:745px">
<svg class="chev" width="16" height="16" viewBox="0 0 16 16" fill="none" stroke="#ced0d6" stroke-width="1.400" stroke-linecap="round" stroke-linejoin="round"><path d="M6.300 4.300L10.800 8L6.300 11.700"/></svg>
<svg class="ic" width="16" height="16" viewBox="0 0 16 16" fill="none" stroke="#ced0d6" stroke-width="1"><path d="M1.5 4v8.2c0 .7.6 1.3 1.300 1.300h10.400c.7 0 1.300-.6 1.300-1.300V5.800c0-.7-.6-1.300-1.300-1.300H8.300L6.500 2.500H2.800c-.7 0-1.300.6-1.300 1.300z"/><circle cx="5.700" cy="8.700" r="1.650" fill="none" stroke-width="1.200"/></svg>
<span class="nm"><span style="letter-spacing:0.33px;margin-right:-0.33px">dagger</span></span><span class="c1"><span style="letter-spacing:0.75px;margin-right:-0.75px">362</span></span><span class="c2"><span style="letter-spacing:0.81px;margin-right:-0.81px">366</span></span><span class="c3"><span style="letter-spacing:0.38px;margin-right:-0.38px">34.3</span> <span style="letter-spacing:-0.77px;margin-right:0.77px">KB</span></span>
</div>
</div>
<div class="thumb" style="top:577px;height:102px"></div>
<div id="lborder"></div><div id="rborder"></div>

</div></body></html>
